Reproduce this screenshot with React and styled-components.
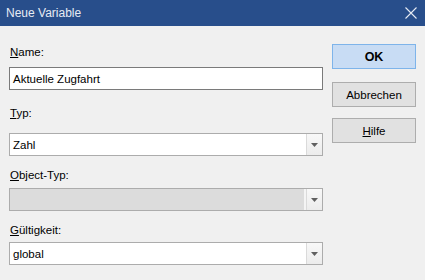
import React from "react";
import styled, { createGlobalStyle } from "styled-components";

const Global = createGlobalStyle`
  html, body { margin: 0; padding: 0; background: #f0f0f0; }
  body { font-family: "Liberation Sans", Arial, sans-serif; }
`;

const Window = styled.div`
  width: 425px;
  height: 280px;
  background: #f0f0f0;
  display: flex;
  flex-direction: column;
  overflow: hidden;
`;

const TitleBar = styled.div`
  height: 26px;
  flex: none;
  background: #284e8b;
  display: flex;
  align-items: center;
  justify-content: space-between;
  padding: 0 8px 0 6px;
  color: #e6ebf4;
  font-size: 12px;
`;

const Close = styled.svg`
  width: 12px;
  height: 12px;
  display: block;
`;

const Body = styled.div`
  display: flex;
  gap: 9px;
  padding: 0 0 0 9px;
`;

const Form = styled.div`
  width: 314px;
  display: flex;
  flex-direction: column;
`;

const Label = styled.div`
  font-size: 11.5px;
  line-height: 14px;
  color: #000;
  margin-top: ${(p) => p.$top}px;
  margin-bottom: ${(p) => p.$gap}px;
  padding-left: 1px;
`;

const Key = styled.span`
  text-decoration: underline;
  text-underline-offset: 1px;
`;

const TextBox = styled.div`
  height: 23px;
  box-sizing: border-box;
  border: 1px solid #7a7a7a;
  background: #fff;
  font-size: 11.5px;
  display: flex;
  align-items: center;
  padding-left: 3px;
`;

const Combo = styled.div`
  height: 23px;
  box-sizing: border-box;
  border: 1px solid #acacac;
  background: ${(p) => (p.$disabled ? "#f4f4f4" : "#fff")};
  font-size: 11.5px;
  display: flex;
  align-items: stretch;
`;

const ComboText = styled.div`
  flex: 1;
  display: flex;
  align-items: center;
  padding-left: 3px;
  background: ${(p) => (p.$disabled ? "#dcdcdc" : "#fff")};
  margin-right: ${(p) => (p.$disabled ? 2 : 0)}px;
`;

const ComboButton = styled.div`
  width: 15px;
  border-left: 1px solid #dadada;
  background: linear-gradient(#f8f8f8, #ececec);
  display: flex;
  align-items: center;
  justify-content: center;
`;

const Arrow = styled.svg`
  width: 7px;
  height: 4px;
  display: block;
`;

const Buttons = styled.div`
  width: 84px;
  display: flex;
  flex-direction: column;
  padding-top: 18px;
`;

const Button = styled.div`
  height: 25px;
  box-sizing: border-box;
  border: 1px solid ${(p) => (p.$default ? "#7eb4ea" : "#adadad")};
  background: ${(p) => (p.$default ? "#c8dcf4" : "#e1e1e1")};
  font-size: ${(p) => (p.$default ? "12.5px" : "11.5px")};
  font-weight: ${(p) => (p.$default ? "bold" : "normal")};
  display: flex;
  align-items: center;
  justify-content: center;
  margin-top: ${(p) => p.$top}px;
  color: #000;
`;

const ComboArrow = () => (
  <ComboButton>
    <Arrow viewBox="0 0 7 4">
      <path d="M0 0h7L3.5 4z" fill="#606060" />
    </Arrow>
  </ComboButton>
);

export default function App() {
  return (
    <Window>
      <Global />
      <TitleBar>
        <span>Neue Variable</span>
        <Close viewBox="0 0 12 12">
          <path d="M0.5 0.5L11.5 11.5M11.5 0.5L0.5 11.5" stroke="#e6ebf4" strokeWidth="1.1" />
        </Close>
      </TitleBar>
      <Body>
        <Form>
          <Label $top={19} $gap={8}>
            <Key>N</Key>ame:
          </Label>
          <TextBox>Aktuelle Zugfahrt</TextBox>
          <Label $top={16} $gap={13}>
            <Key>T</Key>yp:
          </Label>
          <Combo>
            <ComboText>Zahl</ComboText>
            <ComboArrow />
          </Combo>
          <Label $top={12} $gap={6}>
            <Key>O</Key>bject-Typ:
          </Label>
          <Combo $disabled>
            <ComboText $disabled />
            <ComboArrow />
          </Combo>
          <Label $top={12} $gap={5}>
            <Key>G</Key>ültigkeit:
          </Label>
          <Combo>
            <ComboText>global</ComboText>
            <ComboArrow />
          </Combo>
        </Form>
        <Buttons>
          <Button $default $top={0}>OK</Button>
          <Button $top={13}>Abbrechen</Button>
          <Button $top={11}>
            <span>
              <Key>H</Key>ilfe
            </span>
          </Button>
        </Buttons>
      </Body>
    </Window>
  );
}
